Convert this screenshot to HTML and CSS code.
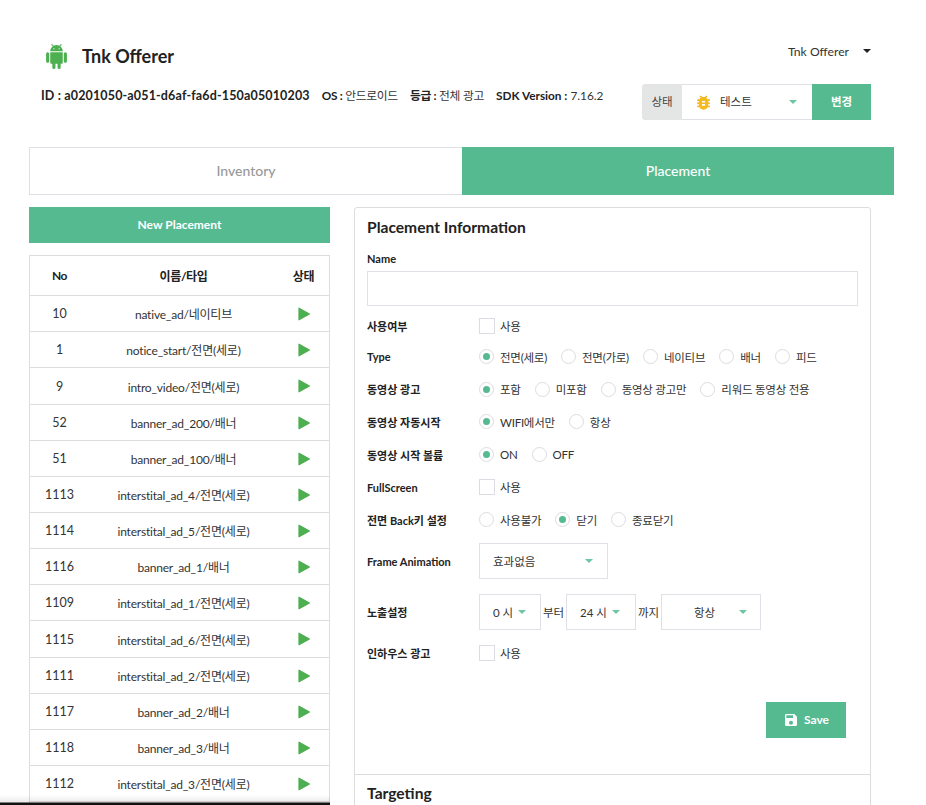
FILE: index.html
```html
<!DOCTYPE html>
<html lang="ko">
<head>
    <meta charset="UTF-8">
    <title>Tnk Offerer</title>
    <link rel="stylesheet" href="styles.css">
</head>
<body>
    <svg class="sprite" width="0" height="0">
        <symbol id="play" viewBox="0 0 12 14"><path d="M1 1.2 11.4 7 1 12.8Z" fill="#4caf50" stroke="#4caf50" stroke-width="1.2" stroke-linejoin="round"/></symbol>
    </svg>

    <header class="app-header">
        <div class="header-top">
            <h1 class="app-title">
                <svg class="android-icon" viewBox="0 0 24 24"><path fill="#4caf50" d="M15,5H14V4H15M10,5H9V4H10M15.53,2.16L16.84,0.85C17.03,0.66 17.03,0.34 16.84,0.14C16.64,-0.05 16.32,-0.05 16.13,0.14L14.65,1.62C13.85,1.23 12.95,1 12,1C11.04,1 10.14,1.23 9.34,1.63L7.85,0.14C7.66,-0.05 7.34,-0.05 7.15,0.14C6.95,0.34 6.95,0.66 7.15,0.85L8.46,2.16C6.97,3.26 6,5 6,7H18C18,5 17,3.25 15.53,2.16M20.5,8A1.5,1.5 0 0,0 19,9.5V16.5A1.5,1.5 0 0,0 20.5,18A1.5,1.5 0 0,0 22,16.5V9.5A1.5,1.5 0 0,0 20.5,8M3.5,8A1.5,1.5 0 0,0 2,9.5V16.5A1.5,1.5 0 0,0 3.5,18A1.5,1.5 0 0,0 5,16.5V9.5A1.5,1.5 0 0,0 3.5,8M6,18A1,1 0 0,0 7,19H8V22.5A1.5,1.5 0 0,0 9.5,24A1.5,1.5 0 0,0 11,22.5V19H13V22.5A1.5,1.5 0 0,0 14.5,24A1.5,1.5 0 0,0 16,22.5V19H17A1,1 0 0,0 18,18V8H6V18Z"/></svg>
                Tnk Offerer
            </h1>
            <div class="user-menu">Tnk Offerer <span class="caret-dark"></span></div>
        </div>
        <div class="header-info">
            <p class="app-meta">
                <span class="meta-id"><b>ID : a0201050-a051-d6af-fa6d-150a05010203</b></span>
                <span class="meta-ko"><b>OS :</b> 안드로이드</span>
                <span class="meta-ko"><b>등급 :</b> 전체 광고</span>
                <span><b>SDK Version :</b> 7.16.2</span>
            </p>
            <div class="status-group">
                <span class="status-label">상태</span>
                <div class="status-select">
                    <svg class="bug-icon" viewBox="0 0 24 24"><path fill="#f5b921" d="M14,12H10V10H14M14,16H10V14H14M20,8H17.19C16.74,7.22 16.12,6.55 15.37,6.04L17,4.41L15.59,3L13.42,5.17C12.96,5.06 12.5,5 12,5C11.5,5 11.04,5.06 10.59,5.17L8.41,3L7,4.41L8.62,6.04C7.88,6.55 7.26,7.22 6.81,8H4V10H6.09C6.04,10.33 6,10.66 6,11V12H4V14H6V15C6,15.34 6.04,15.67 6.09,16H4V18H6.81C7.85,19.79 9.78,21 12,21C14.22,21 16.15,19.79 17.19,18H20V16H17.91C17.96,15.67 18,15.34 18,15V14H20V12H18V11C18,10.66 17.96,10.33 17.91,10H20V8Z"/></svg>
                    <span class="status-text">테스트</span>
                    <span class="caret"></span>
                </div>
                <button class="status-btn" type="button">변경</button>
            </div>
        </div>
    </header>

    <nav class="tabs">
        <div class="tab">Inventory</div>
        <div class="tab tab-active">Placement</div>
    </nav>

    <main class="content">
        <section class="left-col">
            <button class="new-btn" type="button">New Placement</button>
            <table class="place-table">
                <thead>
                    <tr><th class="col-no">No</th><th>이름/타입</th><th class="col-state">상태</th></tr>
                </thead>
                <tbody>
                    <tr><td>10</td><td>native_ad/네이티브</td><td><svg class="play"><use href="#play"/></svg></td></tr>
                    <tr><td>1</td><td>notice_start/전면(세로)</td><td><svg class="play"><use href="#play"/></svg></td></tr>
                    <tr><td>9</td><td>intro_video/전면(세로)</td><td><svg class="play"><use href="#play"/></svg></td></tr>
                    <tr><td>52</td><td>banner_ad_200/배너</td><td><svg class="play"><use href="#play"/></svg></td></tr>
                    <tr><td>51</td><td>banner_ad_100/배너</td><td><svg class="play"><use href="#play"/></svg></td></tr>
                    <tr><td>1113</td><td>interstital_ad_4/전면(세로)</td><td><svg class="play"><use href="#play"/></svg></td></tr>
                    <tr><td>1114</td><td>interstital_ad_5/전면(세로)</td><td><svg class="play"><use href="#play"/></svg></td></tr>
                    <tr><td>1116</td><td>banner_ad_1/배너</td><td><svg class="play"><use href="#play"/></svg></td></tr>
                    <tr><td>1109</td><td>interstital_ad_1/전면(세로)</td><td><svg class="play"><use href="#play"/></svg></td></tr>
                    <tr><td>1115</td><td>interstital_ad_6/전면(세로)</td><td><svg class="play"><use href="#play"/></svg></td></tr>
                    <tr><td>1111</td><td>interstital_ad_2/전면(세로)</td><td><svg class="play"><use href="#play"/></svg></td></tr>
                    <tr><td>1117</td><td>banner_ad_2/배너</td><td><svg class="play"><use href="#play"/></svg></td></tr>
                    <tr><td>1118</td><td>banner_ad_3/배너</td><td><svg class="play"><use href="#play"/></svg></td></tr>
                    <tr><td>1112</td><td>interstital_ad_3/전면(세로)</td><td><svg class="play"><use href="#play"/></svg></td></tr>
                    <tr><td></td><td></td><td></td></tr>
                </tbody>
            </table>
        </section>

        <section class="panel">
            <div class="panel-body">
                <h2 class="panel-title">Placement Information</h2>
                <label class="name-label">Name</label>
                <input class="name-input" type="text">

                <div class="form-rows">
                    <div class="row row-first">
                        <span class="row-label">사용여부</span>
                        <span class="opt"><i class="check"></i>사용</span>
                    </div>
                    <div class="row">
                        <span class="row-label">Type</span>
                        <span class="opt"><i class="radio radio-on"></i>전면(세로)</span>
                        <span class="opt"><i class="radio"></i>전면(가로)</span>
                        <span class="opt"><i class="radio"></i>네이티브</span>
                        <span class="opt"><i class="radio"></i>배너</span>
                        <span class="opt"><i class="radio"></i>피드</span>
                    </div>
                    <div class="row">
                        <span class="row-label">동영상 광고</span>
                        <span class="opt"><i class="radio radio-on"></i>포함</span>
                        <span class="opt"><i class="radio"></i>미포함</span>
                        <span class="opt"><i class="radio"></i>동영상 광고만</span>
                        <span class="opt"><i class="radio"></i>리워드 동영상 전용</span>
                    </div>
                    <div class="row">
                        <span class="row-label">동영상 자동시작</span>
                        <span class="opt"><i class="radio radio-on"></i>WIFI에서만</span>
                        <span class="opt"><i class="radio"></i>항상</span>
                    </div>
                    <div class="row">
                        <span class="row-label">동영상 시작 볼륨</span>
                        <span class="opt"><i class="radio radio-on"></i>ON</span>
                        <span class="opt"><i class="radio"></i>OFF</span>
                    </div>
                    <div class="row">
                        <span class="row-label">FullScreen</span>
                        <span class="opt"><i class="check"></i>사용</span>
                    </div>
                    <div class="row">
                        <span class="row-label">전면 Back키 설정</span>
                        <span class="opt"><i class="radio"></i>사용불가</span>
                        <span class="opt"><i class="radio radio-on"></i>닫기</span>
                        <span class="opt"><i class="radio"></i>종료닫기</span>
                    </div>
                </div>

                <div class="select-row select-row-frame">
                    <span class="row-label">Frame Animation</span>
                    <div class="select select-frame"><span>효과없음</span><span class="caret"></span></div>
                </div>
                <div class="select-row select-row-time">
                    <span class="row-label">노출설정</span>
                    <div class="select select-from"><span>0 시</span><span class="caret"></span></div>
                    <span class="between">부터</span>
                    <div class="select select-to"><span>24 시</span><span class="caret"></span></div>
                    <span class="between">까지</span>
                    <div class="select select-always"><span>항상</span><span class="caret"></span></div>
                </div>
                <div class="row row-inhouse">
                    <span class="row-label">인하우스 광고</span>
                    <span class="opt"><i class="check"></i>사용</span>
                </div>

                <div class="save-wrap">
                    <button class="save-btn" type="button">
                        <svg class="save-icon" viewBox="0 0 24 24"><path fill="#fff" d="M15,9H5V5H15M12,19A3,3 0 0,1 9,16A3,3 0 0,1 12,13A3,3 0 0,1 15,16A3,3 0 0,1 12,19M17,3H5C3.89,3 3,3.9 3,5V19A2,2 0 0,0 5,21H19A2,2 0 0,0 21,19V7L17,3Z"/></svg>
                        Save
                    </button>
                </div>
            </div>
            <div class="panel-section">
                <h2 class="panel-title">Targeting</h2>
            </div>
        </section>
    </main>

    <div class="window-edge"></div>
</body>
</html>
```

FILE: styles.css
```css
html, body {
    height: 805px;
    overflow: hidden;
}
body {
    margin: 0;
    background-color: #fff;
    color: #333;
    font-family: Lato, "Noto Sans CJK KR", sans-serif;
    font-size: 12px;
}
.sprite {
    display: block;
}
.app-header {
    padding: 41px 55px 0 41px;
}
.header-top {
    display: flex;
    justify-content: space-between;
    height: 43px;
}
.app-title {
    display: flex;
    align-items: center;
    height: 30px;
    margin: 0;
    color: #222;
    font-size: 18px;
    font-weight: 700;
}
.android-icon {
    width: 25px;
    height: 25px;
    margin-right: 13px;
    margin-left: 3px;
}
.user-menu {
    display: flex;
    align-items: center;
    height: 20px;
    color: #333;
    font-size: 12.2px;
}
.caret-dark {
    width: 0;
    height: 0;
    margin-left: 14px;
    border-top: 4px solid #222;
    border-right: 4px solid transparent;
    border-left: 4px solid transparent;
}
.header-info {
    display: flex;
    justify-content: space-between;
}
.app-meta {
    display: flex;
    gap: 12px;
    margin: 3px 0 0;
    color: #333;
    font-size: 11.8px;
    line-height: 18px;
}
.app-meta b {
    color: #222;
}
.meta-id {
    font-size: 12.5px;
    letter-spacing: 0.15px;
}
.meta-ko {
    letter-spacing: -0.3px;
}
.status-group {
    display: flex;
    width: 229px;
    height: 36px;
    font-size: 11.5px;
}
.status-label {
    display: flex;
    align-items: center;
    justify-content: center;
    width: 40px;
    padding-bottom: 2px;
    border: 1px solid #e4e4e4;
    border-radius: 3px 0 0 3px;
    background-color: #e4e5e5;
    box-sizing: border-box;
    color: #444;
}
.status-select {
    display: flex;
    align-items: center;
    flex: 1;
    padding: 0 15px 0 12px;
    border: 1px solid #e0e0e6;
    border-left: 0;
    border-right: 0;
    box-sizing: border-box;
}
.status-text {
    padding-bottom: 2px;
}
.bug-icon {
    width: 19px;
    height: 19px;
    margin-right: 7px;
}
.status-select .caret {
    margin-left: auto;
}
.status-btn {
    width: 59px;
    padding: 0 0 2px;
    border: none;
    background-color: #56ba91;
    color: #fff;
    font: inherit;
    font-weight: 700;
}
.caret {
    width: 0;
    height: 0;
    border-top: 4px solid #6cc7a2;
    border-right: 4px solid transparent;
    border-left: 4px solid transparent;
}
.tabs {
    display: flex;
    width: 865px;
    height: 48px;
    margin: 27px 0 0 29px;
}
.tab {
    display: flex;
    align-items: center;
    justify-content: center;
    flex: 1;
    padding-bottom: 2px;
    border: 1px solid #dfdfe5;
    border-right: 0;
    color: #999;
    font-size: 14px;
    font-weight: 500;
}
.tab-active {
    border: none;
    background-color: #56ba91;
    color: #fff;
}
.content {
    display: flex;
    gap: 24px;
    margin: 12px 0 0 29px;
}
.left-col {
    width: 301px;
    flex: none;
}
.new-btn {
    display: block;
    width: 100%;
    height: 36px;
    padding: 0 0 2px;
    border: none;
    background-color: #56ba91;
    color: #fff;
    font: inherit;
    font-weight: 700;
}
.place-table {
    width: 100%;
    margin-top: 12px;
    border: 1px solid #ddd;
    border-collapse: collapse;
    table-layout: fixed;
}
.place-table th,
.place-table td {
    border-top: 1px solid #ddd;
    padding: 0;
    text-align: center;
    color: #333;
    font-size: 12px;
    letter-spacing: -0.2px;
}
.place-table th {
    height: 39px;
    color: #222;
    font-weight: 700;
    letter-spacing: -0.4px;
}
.place-table td {
    height: 35px;
}
.place-table td:first-child {
    font-size: 12.5px;
    letter-spacing: 0;
}
.place-table tbody tr:nth-child(3) td,
.place-table tbody tr:nth-child(10) td {
    height: 36px;
}
.col-no {
    width: 59px;
}
.col-state {
    width: 51px;
}
.play {
    display: block;
    width: 12px;
    height: 14px;
    margin: 0 auto;
}
.panel {
    width: 517px;
    flex: none;
    border: 1px solid #ddd;
    border-radius: 3px;
    box-sizing: border-box;
}
.panel-body {
    height: 566px;
    padding: 0 12px;
    box-sizing: border-box;
}
.panel-title {
    margin: 0;
    padding-top: 9px;
    color: #222;
    font-size: 15.6px;
    font-weight: 700;
    line-height: 20px;
}
.name-label {
    display: block;
    margin-top: 14px;
    color: #222;
    font-size: 11px;
    font-weight: 700;
    line-height: 16px;
}
.name-input {
    display: block;
    width: 491px;
    height: 35px;
    margin-top: 4px;
    border: 1px solid #e0e0e6;
    box-sizing: border-box;
}
.form-rows {
    margin-top: 5.5px;
}
.row {
    display: flex;
    align-items: center;
    height: 32.6px;
}
.row-first {
    height: 29px;
}
.row-label {
    width: 112px;
    flex: none;
    color: #222;
    font-size: 11px;
    font-weight: 700;
}
.opt {
    display: flex;
    align-items: center;
    margin-right: 14px;
    color: #333;
    font-size: 11.5px;
    letter-spacing: -0.25px;
}
.check {
    width: 16px;
    height: 16px;
    margin-right: 5px;
    border: 1px solid #dcdce2;
    box-sizing: border-box;
}
.radio {
    position: relative;
    width: 15px;
    height: 15px;
    margin-right: 6px;
    border: 1px solid #dcdce2;
    border-radius: 50%;
    box-sizing: border-box;
}
.radio-on::after {
    content: "";
    position: absolute;
    top: 3px;
    left: 3px;
    width: 7px;
    height: 7px;
    border-radius: 50%;
    background-color: #56ba91;
}
.select-row {
    display: flex;
    align-items: center;
    height: 36px;
}
.select-row-frame {
    margin-top: 7px;
}
.select-row-time {
    margin-top: 15px;
}
.select {
    display: flex;
    align-items: center;
    justify-content: space-between;
    height: 36px;
    padding: 0 14px 0 13px;
    border: 1px solid #e0e0e6;
    box-sizing: border-box;
    color: #333;
    font-size: 11.5px;
}
.select-frame {
    width: 129px;
}
.select-from {
    width: 62px;
    justify-content: flex-start;
    gap: 5px;
    padding-right: 0;
}
.select-to {
    width: 70px;
    justify-content: flex-start;
    gap: 5px;
    padding-right: 0;
}
.select-always {
    width: 100px;
    padding-left: 32px;
    padding-right: 13px;
}
.between {
    width: 25px;
    text-align: center;
    font-size: 11.5px;
}
.row-inhouse {
    margin-top: 7px;
}
.save-wrap {
    display: flex;
    justify-content: flex-end;
    margin-top: 32px;
    padding-right: 12px;
}
.save-btn {
    display: flex;
    align-items: center;
    justify-content: center;
    width: 80px;
    height: 36px;
    padding: 0;
    border: none;
    background-color: #56ba91;
    color: #fff;
    font: inherit;
    font-size: 12px;
    font-weight: 700;
}
.save-icon {
    width: 16px;
    height: 16px;
    margin-right: 5px;
}
.panel-section {
    border-top: 1px solid #ddd;
    padding: 0 12px;
}
.panel-section .panel-title {
    padding-top: 8px;
}
.window-edge {
    position: fixed;
    left: 0;
    bottom: 0;
    width: 330px;
    height: 10px;
    background: linear-gradient(to bottom, rgba(0, 0, 0, 0), rgba(0, 0, 0, 0.08) 70%, #111 80%);
}
```
